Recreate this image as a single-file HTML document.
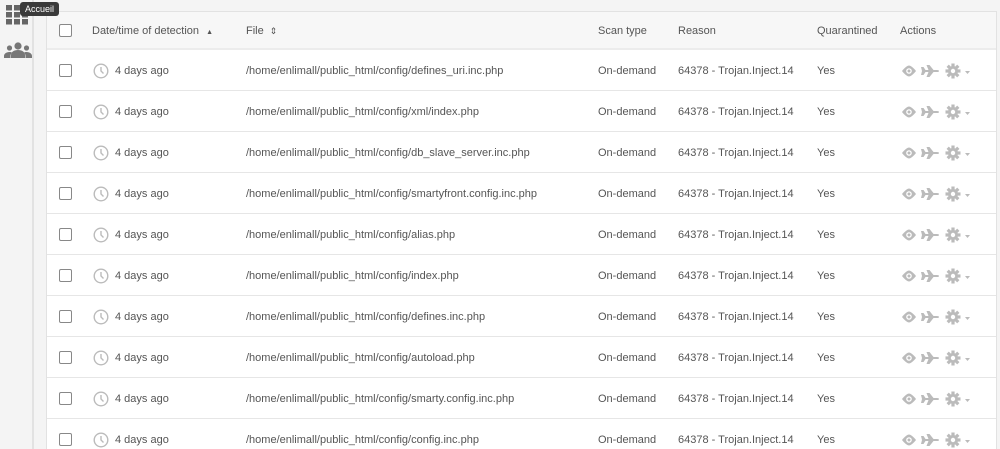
<!DOCTYPE html>
<html><head><meta charset="utf-8"><style>
*{margin:0;padding:0;box-sizing:border-box}
html,body{width:1000px;height:449px;overflow:hidden}
body{background:#f4f4f4;font-family:"Liberation Sans",sans-serif;font-size:11px;color:#555;position:relative}
.side{position:absolute;left:0;top:0;width:34px;height:449px;background:#f4f4f4;border-right:2px solid #e2e2e2}
.tbl{position:absolute;left:46px;top:11px;width:951px;height:438px;background:#fff;border:1px solid #e2e2e2;border-bottom:none;overflow:hidden}
.hdr{position:absolute;left:0;top:0;width:100%;height:38px;background:#f7f7f7;border-bottom:2px solid #ececec}
.row{position:absolute;left:0;width:100%;height:41px;border-bottom:1px solid #e6e6e6}
.c{position:absolute;top:50%;transform:translateY(-50%);white-space:nowrap}
.row .c{margin-top:1px}
.hdr .c{margin-top:1px}
.cb{position:absolute;left:12px;top:50%;margin-top:-6px;width:13px;height:13px;border:1.3px solid #888;border-radius:2px;background:#fff}
.tip{position:absolute;left:20px;top:2px;background:#3a3a3a;color:#fff;font-size:9px;padding:2px 5px;border-radius:3px;z-index:5}
</style></head><body>
<div class="side">
<svg style="position:absolute;left:6px;top:5px" width="22" height="20" viewBox="0 0 22 20" fill="#666"><rect x="0" y="0" width="6" height="5.5"/><rect x="8" y="0" width="6" height="5.5"/><rect x="16" y="0" width="6" height="5.5"/><rect x="0" y="7" width="6" height="5.5"/><rect x="8" y="7" width="6" height="5.5"/><rect x="16" y="7" width="6" height="5.5"/><rect x="0" y="14" width="6" height="5.5"/><rect x="8" y="14" width="6" height="5.5"/><rect x="16" y="14" width="6" height="5.5"/></svg>
<svg style="position:absolute;left:4px;top:42px" width="28" height="16" viewBox="0 0 28 16" fill="#777"><circle cx="14" cy="4" r="3.6"/><path d="M7 16v-3c0-3 3-5 7-5s7 2 7 5v3z"/><circle cx="5.5" cy="6" r="2.6"/><path d="M0 16v-2c0-2 2-4 5.5-4 1 0 2 .3 2.5.6-1 1-1.5 2-1.5 3.4v2z"/><circle cx="22.5" cy="6" r="2.6"/><path d="M28 16v-2c0-2-2-4-5.5-4-1 0-2 .3-2.5.6 1 1 1.5 2 1.5 3.4v2z"/></svg>
</div>
<div class="tip">Accueil</div>
<div class="tbl">
<div class="hdr">
<div class="cb"></div>
<div class="c" style="left:45px">Date/time of detection <span style="font-size:7px;margin-left:4px">▲</span></div>
<div class="c" style="left:199px">File <span style="font-size:9px;margin-left:3px">⇕</span></div>
<div class="c" style="left:551px">Scan type</div>
<div class="c" style="left:631px">Reason</div>
<div class="c" style="left:770px">Quarantined</div>
<div class="c" style="left:853px">Actions</div>
</div>
<div id="rows"></div>
</div>
<script>
var f=["defines_uri.inc.php","xml/index.php","db_slave_server.inc.php","smartyfront.config.inc.php","alias.php","index.php","defines.inc.php","autoload.php","smarty.config.inc.php","config.inc.php"];
var h="";
f.forEach(function(n,i){
h+='<div class="row" style="top:'+(38+i*41)+'px"><div class="cb"></div>'+
'<svg class="c" style="left:46px" width="16" height="16" viewBox="0 0 16 16" fill="none" stroke="#bbb" stroke-width="1.4"><circle cx="8" cy="8" r="6.8"/><path d="M8 4v4l2.5 2.5"/></svg>'+
'<div class="c" style="left:68px">4 days ago</div>'+
'<div class="c" style="left:199px">/home/enlimall/public_html/config/'+n+'</div>'+
'<div class="c" style="left:551px">On-demand</div>'+
'<div class="c" style="left:631px">64378 - Trojan.Inject.14</div>'+
'<div class="c" style="left:770px">Yes</div>'+
'<svg class="c" style="left:854px" width="72" height="16" viewBox="0 0 72 16"><path d="M1 8c3-4 6-5.5 7-5.5S12 4 15 8c-3 4-6 5.5-7 5.5S4 12 1 8z" fill="#bbb"/><circle cx="8" cy="8" r="2.8" fill="#fff"/><circle cx="8" cy="8" r="1.5" fill="#bbb"/><path d="M20 4h2.5l2 3h3l-2-5h3l4 5h3.5q2 0 2 1t-2 1h-3.5l-4 5h-3l2-5h-3l-2 3h-2.5l1-4z" fill="#bbb"/><g transform="translate(52 8)" fill="#bbb"><circle r="5"/><rect x="-1.6" y="-7.5" width="3.2" height="15"/><rect x="-7.5" y="-1.6" width="15" height="3.2"/><rect x="-1.6" y="-7.5" width="3.2" height="15" transform="rotate(45)"/><rect x="-1.6" y="-7.5" width="3.2" height="15" transform="rotate(-45)"/><circle r="2.2" fill="#fff"/></g><path d="M64 8h5l-2.5 3z" fill="#bbb"/></svg>'+
'</div>';});
document.getElementById("rows").innerHTML=h;
</script>
</body></html>
